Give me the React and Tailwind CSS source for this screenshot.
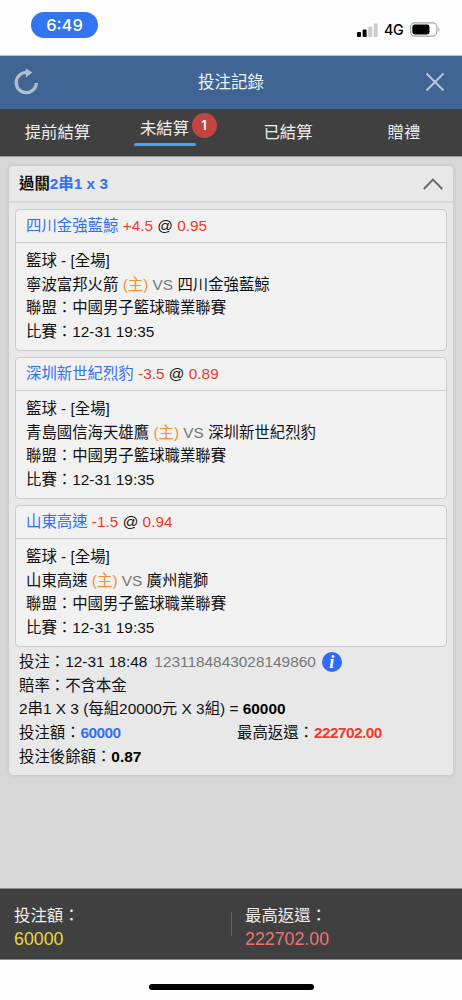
import React, { useState } from 'react';

const legs = [
    { pick: '四川金強藍鯨', handicap: '+4.5', odds: '0.95', home: '寧波富邦火箭', away: '四川金強藍鯨' },
    { pick: '深圳新世紀烈豹', handicap: '-3.5', odds: '0.89', home: '青島國信海天雄鷹', away: '深圳新世紀烈豹' },
    { pick: '山東高速', handicap: '-1.5', odds: '0.94', home: '山東高速', away: '廣州龍獅' },
];

const tabs = [
    { label: '提前結算', width: 'w-[115px]' },
    { label: '未結算', width: 'w-[115px]', count: 1 },
    { label: '已結算', width: 'w-[116px]' },
    { label: '贈禮', width: 'w-[116px]' },
];

const StatusBar = () => (
    <div className="flex h-[56px] items-start justify-between border-b border-[#b8c4d4] bg-[#fefefe] pl-[31px] pr-[21px]">
        <div className="mt-[12px] flex h-[26px] w-[67px] items-center justify-center rounded-full bg-[#3176ee] pt-[2px] font-['Inter','Liberation_Sans',sans-serif] text-[16.5px] font-medium text-white">
            6:49
        </div>
        <div className="mt-[20px] flex h-[20px] items-center">
            <svg width="21" height="14" viewBox="0 0 21 14" className="mb-px">
                <rect x="0" y="9" width="4" height="5" rx="1" fill="#000" />
                <rect x="5.6" y="6.5" width="4" height="7.5" rx="1" fill="#000" />
                <rect x="11.2" y="3.5" width="4" height="10.5" rx="1" fill="#ccc" />
                <rect x="16.7" y="0.4" width="4" height="13.6" rx="1" fill="#ccc" />
            </svg>
            <span className="ml-[6px] w-[20px] font-['Inter','Liberation_Sans',sans-serif] text-[14.3px] leading-[20px] font-medium tracking-[-0.3px] text-black">4G</span>
            <svg width="31" height="15" viewBox="0 0 31 15" className="ml-[6px] -mt-[2px]">
                <rect x="0.6" y="0.9" width="26.2" height="13.2" rx="4" fill="none" stroke="#a2a2a2" strokeWidth="1.1" />
                <rect x="2.3" y="2.6" width="17.2" height="9.8" rx="2.3" fill="#000" />
                <path d="M28.3 5.2c1.5.6 1.5 4 0 4.6z" fill="#a2a2a2" />
            </svg>
        </div>
    </div>
);

const Leg = ({ leg }) => (
    <div className="h-[142px] rounded-[4px] border border-[#cccccc] bg-[#f1f1f1]">
        <div className="h-[33px] border-b border-[#cccccc] pl-[10px] leading-[32px] text-[#ee3a2d]">
            <span className="text-[#3370f2]">{leg.pick}</span> {leg.handicap} <span className="text-[#111]">@</span> {leg.odds}
        </div>
        <div className="pt-[6px] pl-[10px]">
            <p>籃球 - [全場]</p>
            <p>
                {leg.home} <span className="text-[#f09235]">(主)</span> <span className="text-[#777]">VS</span> {leg.away}
            </p>
            <p>聯盟：中國男子籃球職業聯賽</p>
            <p>比賽：12-31 19:35</p>
        </div>
    </div>
);

const App = () => {
    const [open, setOpen] = useState(true);
    const [active, setActive] = useState('未結算');

    return (
        <div className="flex h-[1000px] w-[462px] flex-col overflow-hidden bg-[#fefefe] font-['Liberation_Sans','Noto_Sans_CJK_TC',sans-serif] text-[15.4px] leading-[23.7px] text-[#111]">
            <StatusBar />

            <header className="flex h-[53px] items-center justify-between bg-[#406493] pr-[17px] pl-[14px]">
                <button>
                    <svg width="25" height="28" viewBox="0 0 25 28" className="-mt-[3px]">
                        <path d="M13 5.5A10.1 10.1 0 1 0 22.4 16" fill="none" stroke="#afbdd1" strokeWidth="3.2" />
                        <path d="M11.8 1.2v9.2l6.6-4.8z" fill="#afbdd1" />
                    </svg>
                </button>
                <h1 className="-ml-[2px] text-[16.5px] text-[#eef1f5]">投注記錄</h1>
                <button>
                    <svg width="20" height="20" viewBox="0 0 20 20" className="-mt-[2px]">
                        <path d="M1.5 1.5l17 17M18.5 1.5l-17 17" fill="none" stroke="#b9c6d7" strokeWidth="2" />
                    </svg>
                </button>
            </header>

            <nav className="flex h-[48px] border-b border-[#9a9a9a] bg-[#404040] text-[16.4px] text-[#eee]">
                {tabs.map((tab) => (
                    <button key={tab.label} onClick={() => setActive(tab.label)} className={`${tab.width} flex justify-center`}>
                        {tab.label === active ? (
                            <span className="relative ml-[-16px] mt-[8px] h-[29px] w-[62px] px-[6px] whitespace-nowrap">
                                {tab.label}
                                <span className="absolute bottom-0 left-0 h-[3.5px] w-full rounded-full bg-[#42a5f5]" />
                                {tab.count && (
                                    <span className="absolute -top-[4px] left-[58px] flex h-[25px] w-[25px] items-center justify-center rounded-full bg-[#c34440] font-['Inter','Liberation_Sans',sans-serif] text-[13px] font-semibold text-white">
                                        {tab.count}
                                    </span>
                                )}
                            </span>
                        ) : (
                            <span className="mt-[12px]">{tab.label}</span>
                        )}
                    </button>
                ))}
            </nav>

            <main className="h-[731px] bg-[#d7d7d7] px-[9px] pt-[9px]">
                <section className="rounded-[4px] bg-[#e8e8e8] pb-[6px] shadow-[0_0_4px_rgba(0,0,0,0.12)]">
                    <div className="flex h-[37px] items-center justify-between border-b-2 border-[#d8d8d8] pr-[10px] pl-[10px] font-bold">
                        <span>
                            過關<span className="text-[#3370f2]">2串1 x 3</span>
                        </span>
                        <button onClick={() => setOpen(!open)}>
                            <svg width="20" height="12" viewBox="0 0 20 12">
                                <path d="M0.8 11L10 1.5l9.2 9.5" fill="none" stroke="#666" strokeWidth="1.8" />
                            </svg>
                        </button>
                    </div>

                    {open && (
                        <div className="flex flex-col gap-[6px] px-[6px] pt-[6px]">
                            {legs.map((leg) => (
                                <Leg key={leg.pick} leg={leg} />
                            ))}
                        </div>
                    )}

                    {/* Ticket summary */}
                    <div className="pt-[3px] pl-[10px]">
                        <div className="flex items-center">
                            投注：12-31 18:48
                            <span className="ml-[7px] text-[#777]">1231184843028149860</span>
                            <span className="ml-[6px] flex h-[20px] w-[20px] items-center justify-center rounded-full bg-[#2f6bf3] font-['Liberation_Serif',serif] text-[18px] leading-[20px] font-bold text-white italic">
                                i
                            </span>
                        </div>
                        <p>賠率：不含本金</p>
                        <p>
                            2串1 X 3 (每組20000元 X 3組) = <b className="text-black">60000</b>
                        </p>
                        <div className="flex">
                            <p className="w-[218px]">
                                投注額：<b className="tracking-[-0.55px] text-[#3370f2]">60000</b>
                            </p>
                            <p>
                                最高返還：<b className="tracking-[-0.55px] text-[#ee3a2d]">222702.00</b>
                            </p>
                        </div>
                        <p>
                            投注後餘額：<b className="text-black">0.87</b>
                        </p>
                    </div>
                </section>
            </main>

            <footer className="flex h-[72px] items-center border-y border-[#8a8a8a] bg-[#404040] text-[16.4px] leading-[24px] text-[#eee]">
                <div className="w-[231px] pt-[5px] pl-[14px]">
                    <p>投注額：</p>
                    <p className="text-[17.8px] text-[#ecd53e]">60000</p>
                </div>
                <div className="h-[24px] w-px bg-[#666]" />
                <div className="pt-[5px] pl-[13px]">
                    <p>最高返還：</p>
                    <p className="text-[17.8px] text-[#e97575]">222702.00</p>
                </div>
            </footer>

            <div className="flex justify-center pt-[24px]">
                <div className="h-[6px] w-[165px] rounded-full bg-black" />
            </div>
        </div>
    );
};

export default App;
